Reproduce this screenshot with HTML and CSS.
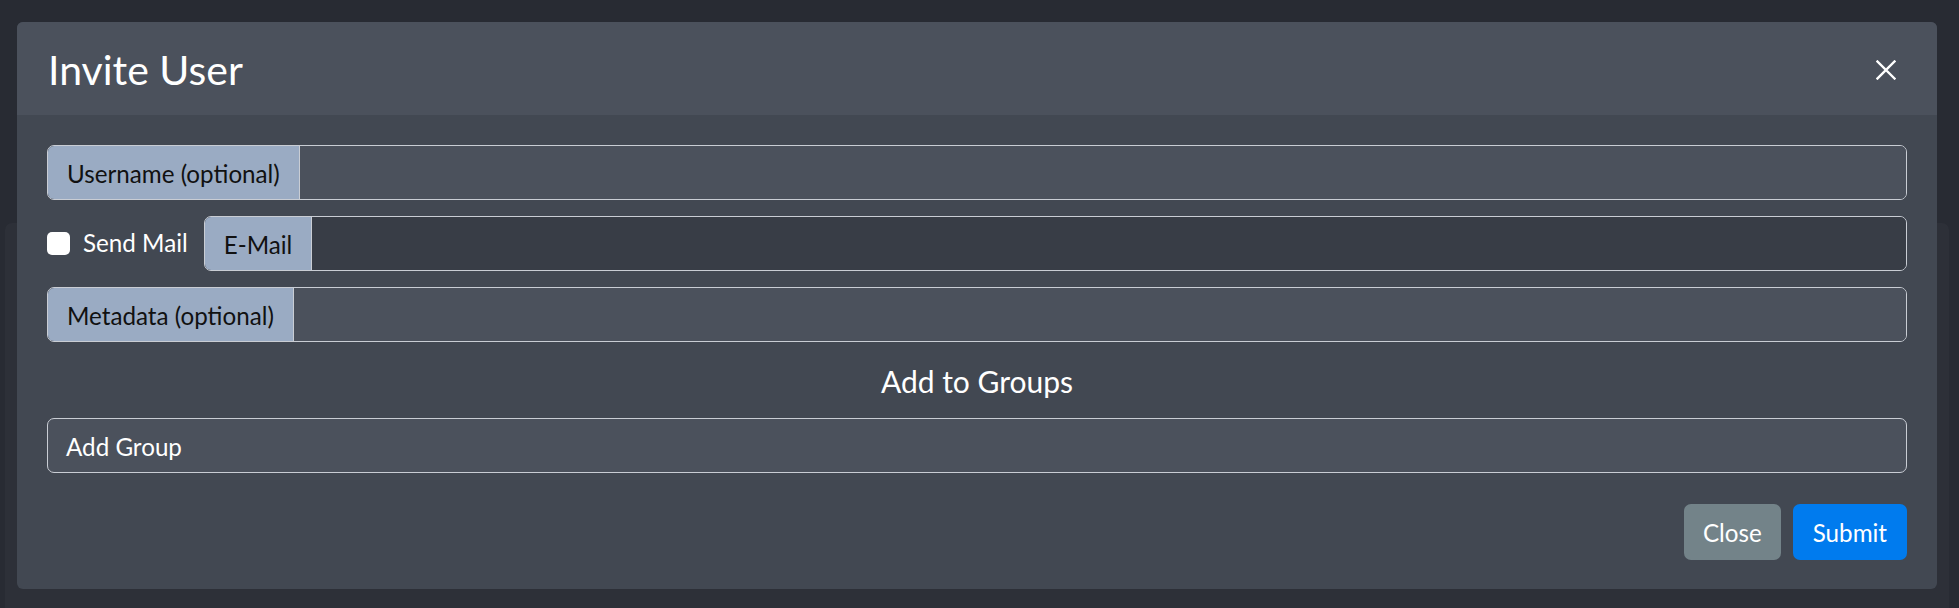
FILE: index.html
```html
<!DOCTYPE html>
<html lang="en">
<head>
<meta charset="utf-8">
<title>Invite User</title>
<link rel="stylesheet" href="styles.css">
</head>
<body>
<div class="page-card"></div>
<div class="backdrop">
  <div class="modal">
    <div class="modal-header">
      <h3 class="modal-title">Invite User</h3>
      <button class="close" type="button" aria-label="Close">
        <svg width="20" height="20" viewBox="0 0 20 20"><path d="M1.5 1.5 L18.5 18.5 M18.5 1.5 L1.5 18.5" stroke="#fff" stroke-width="2.4" stroke-linecap="square" fill="none"/></svg>
      </button>
    </div>
    <div class="modal-body">
      <div class="input-group">
        <span class="addon">Username (optional)</span>
        <input class="field" type="text">
      </div>
      <div class="row-mail">
        <label class="check">
          <span class="box"></span>
          <span class="check-label">Send Mail</span>
        </label>
        <div class="input-group grow">
          <span class="addon">E-Mail</span>
          <input class="field field-dark" type="text">
        </div>
      </div>
      <div class="input-group">
        <span class="addon">Metadata (optional)</span>
        <input class="field" type="text">
      </div>
      <h5 class="section-title">Add to Groups</h5>
      <div class="select-box">Add Group</div>
      <div class="modal-footer">
        <button class="btn btn-secondary" type="button">Close</button>
        <button class="btn btn-primary" type="button">Submit</button>
      </div>
    </div>
  </div>
</div>
</body>
</html>
```

FILE: styles.css
```css
* { box-sizing: border-box; }

html, body {
  margin: 0;
  padding: 0;
}

body {
  background: #282b33;
  font-family: Lato, "Open Sans", sans-serif;
  font-size: 24.2px;
  line-height: 1.5;
  color: #fff;
  width: 1959px;
  height: 608px;
  overflow: hidden;
}

.page-card {
  margin: 223px 0 0 5px;
  width: 1944px;
  height: 385px;
  background: #2d3038;
  border-radius: 7px 7px 0 0;
}

.backdrop {
  position: absolute;
  top: 22px;
  left: 17px;
}

.modal {
  width: 1920px;
  height: 567px;
  background: #424852;
  border-radius: 6px;
  overflow: hidden;
  display: flex;
  flex-direction: column;
}

.modal-header {
  height: 93px;
  background: #4b515c;
  display: flex;
  align-items: center;
  padding: 2px 30px 0 31px;
}

.modal-title {
  margin: 0;
  font-size: 41px;
  font-weight: 400;
  line-height: 63px;
  flex: 1;
}

.close {
  background: none;
  border: 0;
  padding: 0;
  margin: 0 11px 0 0;
  width: 20px;
  height: 20px;
  display: flex;
  cursor: pointer;
}

.modal-body {
  padding: 30px 30px 0 30px;
  display: flex;
  flex-direction: column;
}

.input-group {
  display: flex;
  height: 55px;
  border: 1px solid #c9cdd4;
  border-radius: 7px;
  overflow: hidden;
  margin-bottom: 16px;
}

.input-group.grow {
  flex: 1;
  margin-bottom: 0;
}

.addon {
  background: #9aabc3;
  color: #111;
  padding: 4px 19px 0;
  display: flex;
  align-items: center;
  white-space: nowrap;
  border-right: 1px solid #c9cdd4;
}

.field {
  flex: 1;
  border: 0;
  background: #4b515c;
  font: inherit;
  color: #fff;
  padding: 4px 18px 0;
  outline: none;
}

.field-dark {
  background: #383d46;
}

.row-mail {
  display: flex;
  align-items: center;
  margin-bottom: 16px;
}

.check {
  display: flex;
  align-items: center;
  margin-right: 16px;
}

.box {
  width: 23px;
  height: 23px;
  background: #fff;
  border-radius: 5px;
  margin-right: 13px;
}

.check-label {
  color: #fff;
}

.section-title {
  margin: 5px 0 19px;
  font-size: 30px;
  font-weight: 400;
  line-height: 36px;
  text-align: center;
}

.select-box {
  height: 55px;
  border: 1px solid #c9cdd4;
  border-radius: 7px;
  background: #4b515c;
  padding: 4px 18px 0;
  display: flex;
  align-items: center;
}

.modal-footer {
  display: flex;
  justify-content: flex-end;
  gap: 12px;
  margin-top: 31px;
}

.btn {
  height: 56px;
  border: 0;
  border-radius: 7px;
  font: inherit;
  color: #fff;
  padding: 3px 19px 0;
  cursor: pointer;
}

.btn-secondary {
  background: #738389;
}

.btn-primary {
  background: #007bee;
  padding: 3px 20px 0;
}
```
